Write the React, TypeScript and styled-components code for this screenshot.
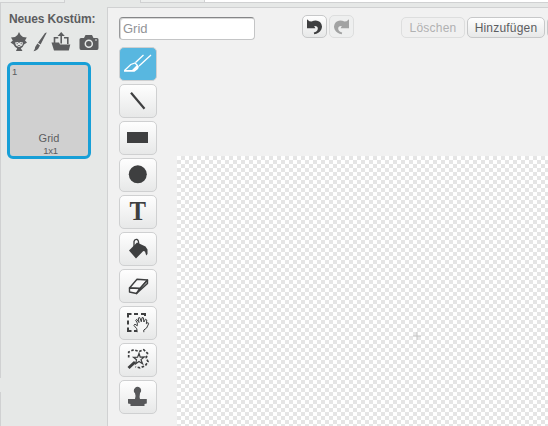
import React from "react";
import styled, { createGlobalStyle, css } from "styled-components";

const GlobalStyle = createGlobalStyle`
  * { box-sizing: border-box; }
  html, body { margin: 0; overflow: hidden; }
  body { font-family: "Liberation Sans", Arial, sans-serif; background: #e6e8e8; }
`;

const Page = styled.div`
  width: 548px;
  height: 426px;
  display: flex;
  flex-direction: column;
  background: #e6e8e7;
  overflow: hidden;
`;

const TabStrip = styled.div`
  display: flex;
  flex: none;
  height: 3px;
`;

const Tab = styled.div<{ $width: number; $active?: boolean }>`
  width: ${(p) => p.$width}px;
  background: ${(p) => (p.$active ? "#e6e8e7" : "#eceeed")};
  border-right: 1px solid #d0d1d2;
  border-bottom: ${(p) => (p.$active ? "none" : "1px solid #d0d1d2")};
`;

const TabRest = styled.div`
  flex: 1;
  background: #fff;
  border-bottom: 1px solid #d0d1d2;
`;

const Body = styled.div`
  flex: 1;
  display: flex;
  min-height: 0;
`;

const Edge = styled.div`
  width: 1px;
  flex: none;
  background: linear-gradient(#d0d1d2 375px, #e6e8e7 375px, #e6e8e7 389px, #d0d1d2 389px);
`;

const Sidebar = styled.aside`
  width: 106px;
  flex: none;
  padding: 9px 0 0 6px;
`;

const SideTitle = styled.h2`
  margin: 0 0 0 2px;
  font-size: 12px;
  line-height: 14px;
  font-weight: bold;
  letter-spacing: -0.13px;
  color: #5c5d5f;
  white-space: nowrap;
`;

const SideIcons = styled.div`
  display: flex;
  align-items: center;
  height: 24px;
  margin: 4px 0 0 3px;
`;

const SideIcon = styled.svg<{ $gap?: number }>`
  flex: none;
  display: block;
  margin-right: ${(p) => p.$gap ?? 0}px;
`;

const Costume = styled.div`
  width: 84px;
  height: 97px;
  margin-top: 8px;
  border: 3px solid #179fd7;
  border-radius: 6px;
  background: #d0d0d0;
  color: #5c5d5f;
  display: flex;
  flex-direction: column;
  align-items: center;
`;

const CostumeNumber = styled.span`
  align-self: flex-start;
  margin: 2px 0 0 2px;
  font-size: 9.5px;
  line-height: 10px;
`;

const CostumeName = styled.span`
  margin-top: auto;
  font-size: 11px;
  line-height: 13px;
`;

const CostumeSize = styled.span`
  margin: 0 0 0 3px;
  font-size: 9.5px;
  line-height: 11px;
  letter-spacing: -0.3px;
`;

const Editor = styled.main`
  flex: 1;
  min-width: 0;
  margin-top: 4px;
  border-left: 1px solid #d0d1d2;
  border-top: 1px solid #d0d1d2;
  background: #f1f1f1;
  display: flex;
  flex-direction: column;
`;

const TopBar = styled.header`
  height: 39px;
  flex: none;
  display: flex;
  padding: 7px 0 0 11px;
`;

const NameInput = styled.input`
  width: 136px;
  height: 23px;
  margin-top: 2px;
  padding: 0 0 0 3px;
  border: 1px solid #c4c5c6;
  border-top-color: #858688;
  border-left-color: #98999b;
  border-radius: 4px;
  background: #fff;
  box-shadow: inset 1px 1px 0 #d8d8d8;
  color: #929497;
  font: 13px "Liberation Sans", Arial, sans-serif;
  outline: none;
`;

const buttonFace = css`
  padding: 0;
  flex: none;
  display: flex;
  align-items: center;
  justify-content: center;
  border: 1px solid #cfd0d1;
  background: linear-gradient(#fefefe, #e7e8e8);
`;

const HistoryButton = styled.button`
  ${buttonFace}
  width: 25px;
  height: 23px;
  border-radius: 5px;
  border-color: #c7c8c9;
  &:disabled { border-color: #dddede; background: #eeefef; }
`;

const HistoryGroup = styled.div`
  display: flex;
  gap: 2px;
  margin-left: 47px;
`;

const Actions = styled.div`
  display: flex;
  gap: 2px;
  margin: 2px 0 0 47px;
`;

const ActionButton = styled.button<{ $width: number }>`
  ${buttonFace}
  width: ${(p) => p.$width}px;
  height: 21px;
  border-radius: 5px;
  border-color: #c7c8c9;
  color: #5c5d5f;
  font: 12px "Liberation Sans", Arial, sans-serif;
  letter-spacing: 0.2px;
  white-space: nowrap;
  &:disabled { border-color: #dddede; background: #f0f0f0; color: #b0b1b2; }
`;

const Workspace = styled.div`
  flex: 1;
  display: flex;
  min-height: 0;
`;

const Tools = styled.nav`
  width: 69px;
  flex: none;
  padding-left: 11px;
  display: flex;
  flex-direction: column;
  gap: 3px;
`;

const ToolButton = styled.button<{ $active?: boolean }>`
  ${buttonFace}
  width: 38px;
  height: 34px;
  border-radius: 5px;
  ${(p) => p.$active && css`background: #58b7e0;`}
`;

const Canvas = styled.div`
  flex: 1;
  margin-top: 109px;
  background: conic-gradient(#fff 25%, #e5e5e5 0 50%, #fff 0 75%, #e5e5e5 0) 4px 0 / 8px 8px;
  padding: 176px 0 0 236px;
`;

const Icon = styled.svg`
  display: block;
  flex: none;
`;

const dark = "#3e3f40";

const toolIcons: Record<string, React.ReactNode> = {
  Pinsel: (
    <g fill="none" stroke="#fff" strokeWidth="1.3">
      <path d="M16.5 15.5 24.5 8M20 19 32 8" />
      <path d="M5.5 23.5 11.8 17.5 16 16 18.8 18.8" />
      <path d="M5 23H13L18 18 20 19.5 19 22 15.5 24.8H5Z" fill="#fff" stroke="none" />
    </g>
  ),
  Linie: <path d="M12 8.7 25.5 24.7" stroke={dark} strokeWidth="2.2" />,
  Rechteck: <path d="M8 11H29V22H8Z" fill={dark} />,
  Ellipse: <circle cx="18.8" cy="16.3" r="9" fill={dark} />,
  Text: (
    <text x="18.8" y="25" textAnchor="middle" fontFamily="Liberation Serif, serif" fontWeight="bold" fontSize="27.5" textLength="16.5" lengthAdjust="spacingAndGlyphs" fill={dark}>
      T
    </text>
  ),
  Farbeimer: (
    <g>
      <path d="M10 18.5 18 10.5 26.5 14.5 28.5 17.5V22L27.2 23.5 26 19.5 24.3 19 17 26.5Z" fill={dark} />
      <path d="M15 15.5V9.5Q15.5 7 18 7.5Q20 8 19.6 13.5" fill="none" stroke={dark} strokeWidth="1.3" />
    </g>
  ),
  Radierer: (
    <g fill="#f8f8f8" stroke={dark} strokeWidth="1.4" strokeLinejoin="round">
      <path d="M10.5 19 18 10.3 28.5 11 21 19.5Z" />
      <path d="M10.5 19 21 19.5 17.5 24.5 10.5 23Z" />
      <path d="M21 19.5 28.5 11V14.5L17.5 24.5Z" fill="#b7b8b8" />
    </g>
  ),
  Auswahl: (
    <g>
      <path d="M12.5 8H9V11.5M15 8H19M22 8H26V10M9 14.5V18.5M9 21.5V25H12.5M15 25H18" fill="none" stroke={dark} strokeWidth="2" />
      <path
        d="M18.2 26.2 17.8 22.8 14.8 19.3 16 18.2 18.3 19.8V17L16.7 14.2 17.7 13.3 20 16.5 19.3 12 20.8 11.6 22.3 15.8 23 11.6 24.4 11.8 24.9 16 26.5 13.2 27.8 14 27.3 17.8 29 16.5 29.6 17.8 27.6 22 24.8 24V26.2"
        fill="#f5f5f5" stroke={dark} strokeWidth="1" strokeLinejoin="round"
      />
    </g>
  ),
  Zauberstab: (
    <g fill="none" stroke={dark}>
      <path d="M9.7 14.5V9L14.7 6.7 20 8.5 24.7 6.7 28.5 10.3 27.2 15 29 18.7 26.3 22.7 21 24.8 16.5 23.8" strokeWidth="1.7" strokeDasharray="2.6 1.6" />
      <path d="M9.5 25 16 19" strokeWidth="3" />
      <path d="M20 10.3 21.2 14.2 25.3 14 22 16.6 23.6 20.8 20 18.5 16.6 20.8 17.5 16.8 14.5 14.3 18.6 14.2Z" fill="#f1f1f1" strokeWidth="1.2" />
    </g>
  ),
  Stempel: (
    <path
      d="M14.8 11A3.7 3.7 0 1 1 21 13.3Q20.2 17 21 19H27.8V23.5L25.5 24V26H11.5V24L9 23.5V19H16Q17.2 16.5 16 13.3Q14.8 12.4 14.8 11Z"
      fill="#57585a"
    />
  ),
};

function HistoryArrow({ color, flipped }: { color: string; flipped?: boolean }) {
  return (
    <Icon width="17" height="17" viewBox="0 0 17 17">
      <g transform={flipped ? "translate(17 0) scale(-1 1)" : undefined}>
        <path d="M1 1.2 3.4 3.2 5.5 3.6Q10.5 1.2 14 4Q17.3 7.5 15.2 11.8Q13 15.8 8.2 16.2L7.8 14.6Q11.3 13.6 11.8 11Q12 7.6 8.2 8L9.4 10.2H1Z" fill={color} />
      </g>
    </Icon>
  );
}

export default function App() {
  return (
    <Page>
      <GlobalStyle />
      <TabStrip>
        <Tab $width={65} />
        <Tab $width={76} $active />
        <Tab $width={64} />
        <TabRest />
      </TabStrip>
      <Body>
        <Edge />
        <Sidebar>
          <SideTitle>Neues Kostüm:</SideTitle>
          <SideIcons>
            <SideIcon width="18" height="21" viewBox="0 0 18 21" $gap={5}>
              <path d="M9 0Q10.2 3.5 13 5L16.8 5.5 15 8.5 17 10.5 14 12.5Q13 15.5 10.8 16.2L12.5 19H6L7.2 16.2Q4.5 15.2 3.5 12.5L.5 10.5 2.8 8.5 1 5.5 5 5Q8 3.5 9 0Z" fill="#5c5d5f" />
              <path d="M5 10.5 8 10 9 11.2 10 10 13 10.5 12.3 13.5 9 15 6 13.5Z" fill="#e6e8e7" />
              <path d="M6.5 11.7H8M10.5 11.7H12M7.8 13.5H10.2" stroke="#5c5d5f" strokeWidth=".8" />
            </SideIcon>
            <SideIcon width="14" height="20" viewBox="0 0 14 20" $gap={4}>
              <path d="M13.8.5 7.6 12.5 5 10.8 12 1ZM4.4 11.6 7 13.4 5 17Q3.2 19 .5 19.3Q2.2 17 2.2 15Z" fill="#5c5d5f" />
            </SideIcon>
            <SideIcon width="20" height="20" viewBox="0 0 20 20" $gap={8}>
              <path d="M3.5 11V5.8H7.3M13 5.8H16.8V12M10.2 11.5V3" fill="none" stroke="#5c5d5f" strokeWidth="1.6" />
              <path d="M6.6 4 10.2 0 13.8 4ZM.5 10.5H8L9 12.5H19.3L17.8 18.5H3Z" fill="#5c5d5f" />
            </SideIcon>
            <SideIcon width="20" height="17" viewBox="0 0 20 17">
              <path d="M2 4H5L6.5 1H13L14.5 4H18Q19.5 4 19.5 5.5V14Q19.5 16 18 16H2Q.5 16 .5 14V5.5Q.5 4 2 4Z" fill="#5c5d5f" />
              <circle cx="9.8" cy="9.7" r="3.5" fill="none" stroke="#e6e8e7" strokeWidth="1.5" />
              <path d="M16 6H18" stroke="#e6e8e7" />
            </SideIcon>
          </SideIcons>
          <Costume>
            <CostumeNumber>1</CostumeNumber>
            <CostumeName>Grid</CostumeName>
            <CostumeSize>1x1</CostumeSize>
          </Costume>
        </Sidebar>
        <Editor>
          <TopBar>
            <NameInput defaultValue="Grid" />
            <HistoryGroup>
              <HistoryButton><HistoryArrow color={dark} /></HistoryButton>
              <HistoryButton disabled><HistoryArrow color="#a2a3a3" flipped /></HistoryButton>
            </HistoryGroup>
            <Actions>
              <ActionButton $width={64} disabled>Löschen</ActionButton>
              <ActionButton $width={78}>Hinzufügen</ActionButton>
              <ActionButton $width={70} />
            </Actions>
          </TopBar>
          <Workspace>
            <Tools>
              {Object.entries(toolIcons).map(([name, icon]) => (
                <ToolButton key={name} $active={name === "Pinsel"} aria-label={name}>
                  <Icon width="38" height="34" viewBox="0 0 38 34">{icon}</Icon>
                </ToolButton>
              ))}
            </Tools>
            <Canvas>
              <Icon width="8" height="8" viewBox="0 0 8 8">
                <path d="M4 0V8M0 4H8" stroke="#c4c4c4" />
              </Icon>
            </Canvas>
          </Workspace>
        </Editor>
      </Body>
    </Page>
  );
}
